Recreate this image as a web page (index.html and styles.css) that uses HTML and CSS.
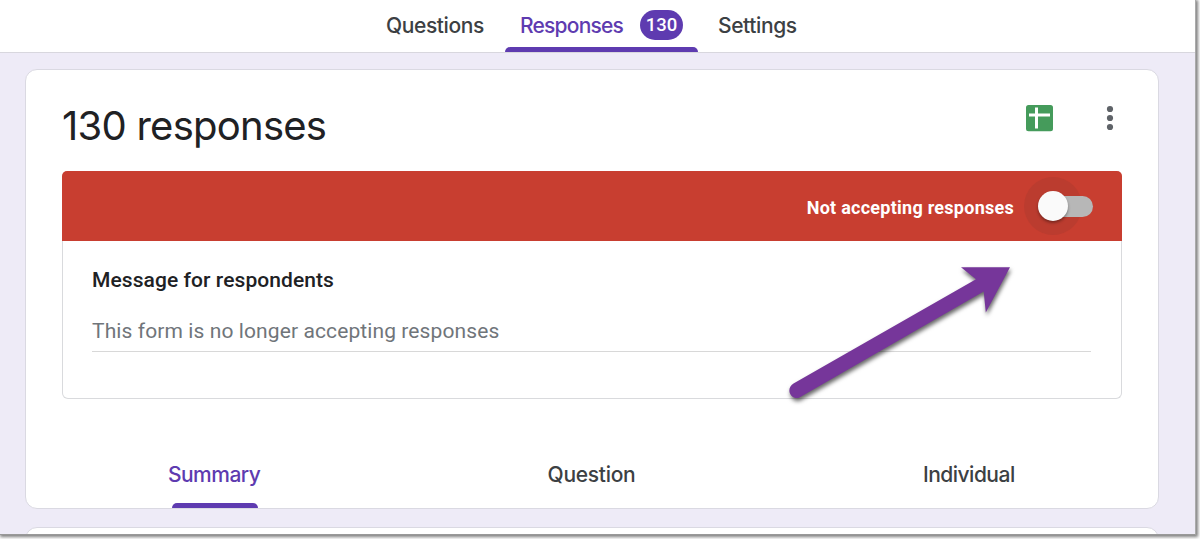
FILE: index.html
```html
<!DOCTYPE html>
<html lang="en">
<head>
    <meta charset="UTF-8">
    <meta name="viewport" content="width=device-width, initial-scale=1.0">
    <title>Form Responses</title>
    <link rel="stylesheet" href="styles.css">
</head>
<body>

<div class="window">
    <!-- Top Navigation -->
    <nav class="top-nav">
        <div class="nav-tab questions"><span>Questions</span></div>
        <div class="nav-tab active"><span>Responses</span><span class="badge">130</span></div>
        <div class="nav-tab settings"><span>Settings</span></div>
    </nav>

    <!-- Responses Card -->
    <main class="card">
        <div class="card-header">
            <h1>130 responses</h1>
            <div class="card-actions">
                <svg class="sheets-icon" width="27" height="27" viewBox="0 0 27 27">
                    <rect width="27" height="26.3" rx="2.5" fill="#459b5b"/>
                    <path d="M3 10h21M10.5 2.5v21" stroke="#fff" stroke-width="3"/>
                </svg>
                <svg class="more-icon" width="8" height="26" viewBox="0 0 8 26" fill="#5f6368">
                    <circle cx="4" cy="4" r="3.1"/>
                    <circle cx="4" cy="13" r="3.1"/>
                    <circle cx="4" cy="22" r="3.1"/>
                </svg>
            </div>
        </div>

        <section class="status-box">
            <div class="status-bar">
                <span class="status-text">Not accepting responses</span>
                <div class="toggle">
                    <div class="track"></div>
                    <div class="knob"></div>
                </div>
            </div>
            <div class="message">
                <h2>Message for respondents</h2>
                <p class="message-input">This form is no longer accepting responses</p>
            </div>
        </section>

        <div class="view-tabs">
            <div class="view-tab active">Summary</div>
            <div class="view-tab question">Question</div>
            <div class="view-tab individual">Individual</div>
        </div>
    </main>

    <div class="card next-card"></div>
</div>

<!-- Arrow pointing at the toggle -->
<svg class="arrow" width="240" height="150" viewBox="780 260 240 150">
    <path d="M1010 267.2H961L976 279.3L793.5 383.5C785.5 388.5 790 399.5 799 397.8L983.7 291.5L985.8 312.5Z" fill="#76369a"/>
</svg>

</body>
</html>
```

FILE: styles.css
```css
/* Global Styling */
* {
    margin: 0;
    padding: 0;
    box-sizing: border-box;
}

body {
    height: 539px;
    overflow: hidden;
    background-color: #fff;
    color: #202124;
    font-family: Inter, sans-serif;
}

.window {
    width: 1196px;
    height: 535px;
    overflow: hidden;
    background-color: #eeebf7;
    border-right: 1px solid #aaa;
    border-bottom: 1px solid #999;
    box-shadow: 1px 1px 3px 1px rgba(0, 0, 0, 0.5);
}

/* Top Navigation */
.top-nav {
    display: flex;
    height: 53px;
    padding-left: 386px;
    background-color: #fff;
    border-bottom: 1px solid #d8d7de;
    font-size: 21px;
    font-weight: 500;
    letter-spacing: -0.4px;
    color: #3c4043;
}

.nav-tab {
    display: flex;
    align-items: center;
    height: 52px;
    padding-bottom: 2px;
}

.nav-tab.questions {
    width: 119px;
}

.nav-tab.active {
    position: relative;
    justify-content: space-between;
    width: 193px;
    padding-left: 15px;
    padding-right: 15px;
    color: #5e3bb0;
    letter-spacing: -0.8px;
}

.nav-tab.active::after {
    content: "";
    position: absolute;
    left: 0;
    bottom: 0;
    width: 100%;
    height: 5px;
    border-radius: 5px 5px 0 0;
    background-color: #5e3bb0;
}

.nav-tab.settings {
    padding-left: 20px;
}

.badge {
    width: 43px;
    height: 30px;
    border-radius: 15px;
    background-color: #5e3bb0;
    color: #fff;
    font-family: Roboto, sans-serif;
    font-size: 18.5px;
    letter-spacing: 0;
    line-height: 30px;
    text-align: center;
}

/* Responses Card */
.card {
    width: 1134px;
    height: 440px;
    margin: 16px 0 0 25px;
    padding: 0 36px;
    background-color: #fff;
    border: 1px solid #dad9e2;
    border-radius: 12px;
}

.next-card {
    height: 60px;
    margin-top: 18px;
}

.card-header {
    display: flex;
    justify-content: space-between;
    height: 101px;
}

.card-header h1 {
    padding-top: 31px;
    font-size: 40px;
    font-weight: 400;
    letter-spacing: -0.75px;
    line-height: 50px;
}

.card-actions {
    display: flex;
    gap: 53px;
    padding-top: 35px;
    padding-right: 8px;
}

/* Accepting Status */
.status-box {
    height: 228px;
    border: 1px solid #d9dadd;
    border-top: none;
    border-radius: 6px;
    font-family: Roboto, sans-serif;
}

.status-bar {
    display: flex;
    align-items: center;
    justify-content: flex-end;
    height: 70px;
    margin: 0 -1px;
    padding-right: 29px;
    border-radius: 5px 5px 0 0;
    background-color: #c83e30;
}

.status-text {
    margin-top: 3px;
    margin-right: 24px;
    color: #fff;
    font-size: 18px;
    font-weight: 700;
    letter-spacing: 0.26px;
}

.toggle {
    display: grid;
    align-items: center;
    width: 55px;
    height: 30px;
}

.track,
.knob {
    grid-area: 1 / 1;
}

.track {
    height: 21px;
    margin-left: 5px;
    border-radius: 11px;
    background-color: #b7b7b7;
    z-index: 1;
}

.knob {
    width: 30px;
    height: 30px;
    border-radius: 50%;
    background-color: #fafafa;
    box-shadow: 0 2px 3px rgba(0, 0, 0, 0.35);
    z-index: 2;
}

/* Focus ring, kept behind the track */
.toggle::before {
    content: "";
    grid-area: 1 / 1;
    width: 58px;
    height: 58px;
    margin: -14px;
    border-radius: 50%;
    background-color: #bb3c2f;
}

.message {
    padding: 25px 30px 0 29px;
}

.message h2 {
    font-size: 21px;
    font-weight: 500;
    letter-spacing: 0.08px;
    line-height: 28px;
}

.message-input {
    height: 58px;
    padding-top: 23px;
    border-bottom: 1px solid #d8d8d8;
    color: #70757a;
    font-size: 21px;
    letter-spacing: 0.1px;
    line-height: 28px;
}

/* Summary / Question / Individual */
.view-tabs {
    display: grid;
    grid-template-columns: repeat(3, 1fr);
    height: 109px;
    margin: 0 -36px;
    padding-top: 62px;
    color: #3c4043;
    font-size: 21px;
    font-weight: 500;
    letter-spacing: -0.5px;
    line-height: 28px;
    text-align: center;
}

.view-tab {
    padding-right: 1px;
}

.view-tab.question {
    letter-spacing: -0.3px;
}

.view-tab.active {
    position: relative;
    color: #5e3bb0;
}

.view-tab.active::after {
    content: "";
    position: absolute;
    left: 146px;
    bottom: 0;
    width: 86px;
    height: 5px;
    border-radius: 5px 5px 0 0;
    background-color: #5e3bb0;
}

.arrow {
    position: absolute;
    left: 780px;
    top: 260px;
    filter: drop-shadow(1px 3px 2px rgba(0, 0, 0, 0.6));
}
```
